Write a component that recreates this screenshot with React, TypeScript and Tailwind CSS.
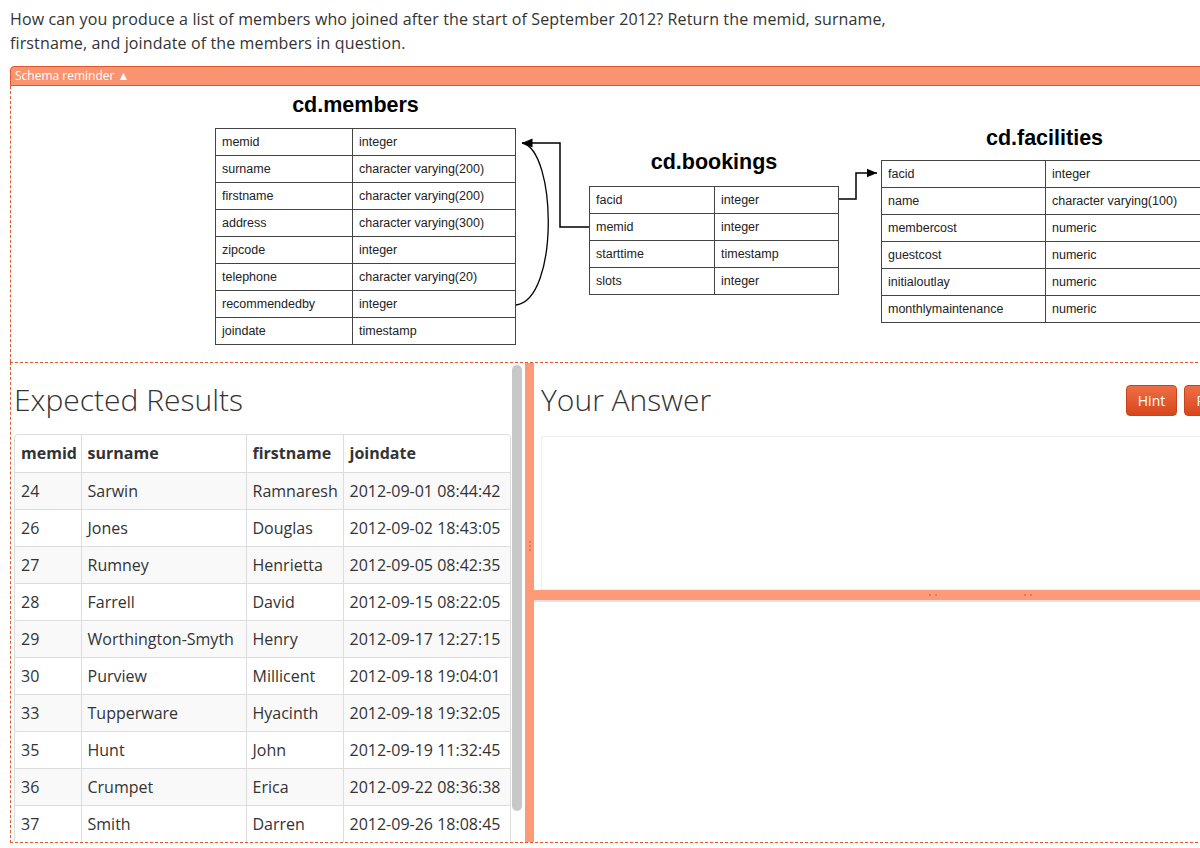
import React from "react";

const MEMBERS: [string, string][] = [
  ["memid", "integer"],
  ["surname", "character varying(200)"],
  ["firstname", "character varying(200)"],
  ["address", "character varying(300)"],
  ["zipcode", "integer"],
  ["telephone", "character varying(20)"],
  ["recommendedby", "integer"],
  ["joindate", "timestamp"],
];

const BOOKINGS: [string, string][] = [
  ["facid", "integer"],
  ["memid", "integer"],
  ["starttime", "timestamp"],
  ["slots", "integer"],
];

const FACILITIES: [string, string][] = [
  ["facid", "integer"],
  ["name", "character varying(100)"],
  ["membercost", "numeric"],
  ["guestcost", "numeric"],
  ["initialoutlay", "numeric"],
  ["monthlymaintenance", "numeric"],
];

const RESULTS: [number, string, string, string][] = [
  [24, "Sarwin", "Ramnaresh", "2012-09-01 08:44:42"],
  [26, "Jones", "Douglas", "2012-09-02 18:43:05"],
  [27, "Rumney", "Henrietta", "2012-09-05 08:42:35"],
  [28, "Farrell", "David", "2012-09-15 08:22:05"],
  [29, "Worthington-Smyth", "Henry", "2012-09-17 12:27:15"],
  [30, "Purview", "Millicent", "2012-09-18 19:04:01"],
  [33, "Tupperware", "Hyacinth", "2012-09-18 19:32:05"],
  [35, "Hunt", "John", "2012-09-19 11:32:45"],
  [36, "Crumpet", "Erica", "2012-09-22 08:36:38"],
  [37, "Smith", "Darren", "2012-09-26 18:08:45"],
];

function SchemaTable({
  title,
  rows,
  col1,
  col2,
  titleClass,
}: {
  title: string;
  rows: [string, string][];
  col1: string;
  col2: string;
  titleClass: string;
}) {
  return (
    <div className="flex flex-col font-['Liberation_Sans',Arial,sans-serif]">
      <div className={`text-center text-[21.5px] font-bold leading-[24px] text-black ${titleClass}`}>
        {title}
      </div>
      <table className="border-collapse text-[12.5px] text-[#222]">
        <tbody>
          {rows.map(([name, type]) => (
            <tr key={name} className="h-[27px]">
              <td className={`${col1} border border-[#444] pl-[6px] align-middle`}>{name}</td>
              <td className={`${col2} border border-[#444] pl-[6px] align-middle`}>{type}</td>
            </tr>
          ))}
        </tbody>
      </table>
    </div>
  );
}

function Connectors() {
  return (
    <svg
      className="pointer-events-none absolute left-0 top-0"
      width="1200"
      height="280"
      viewBox="0 0 1200 280"
      fill="none"
    >
      <defs>
        <marker id="arr" markerWidth="8" markerHeight="8" refX="7" refY="4" orient="auto">
          <path d="M0,1 L7,4 L0,7 Z" fill="#000" />
        </marker>
      </defs>
      <path d="M578 141 H549 V57 H511" stroke="#000" strokeWidth="1.5" markerEnd="url(#arr)" />
      <path d="M505 219 C 548 214, 546 64, 511 57" stroke="#000" strokeWidth="1.3" />
      <path d="M827 113 H845 V87 H866" stroke="#000" strokeWidth="1.5" markerEnd="url(#arr)" />
    </svg>
  );
}

export default function App() {
  return (
    <div className="h-[848px] w-[1200px] overflow-hidden bg-white font-['Open_Sans',sans-serif] text-[#333]">
      <p className="px-[10px] pt-[7px] text-[16px] leading-[24px] tracking-[0.13px]">
        How can you produce a list of members who joined after the start of September 2012? Return the memid, surname,
        <br />
        firstname, and joindate of the members in question.
      </p>

      <div className="ml-[10px] mt-[11px] w-[1228px]">
        {/* Schema reminder */}
        <div className="h-[20px] rounded-tl-[4px] border border-[#e0582a] bg-[#f99471] pl-[4px] text-[12px] leading-[18px] text-white">
          Schema reminder ▲
        </div>
        <div className="relative h-[276px] border-l border-dashed border-[#e0582a]">
          <Connectors />
          <div className="absolute left-[204px] top-[7px]">
            <SchemaTable title="cd.members" rows={MEMBERS} col1="w-[137px]" col2="w-[163px]" titleClass="mb-[11px] -ml-[20px]" />
          </div>
          <div className="absolute left-[578px] top-[64px]">
            <SchemaTable title="cd.bookings" rows={BOOKINGS} col1="w-[125px]" col2="w-[124px]" titleClass="mb-[12px]" />
          </div>
          <div className="absolute left-[870px] top-[40px]">
            <SchemaTable title="cd.facilities" rows={FACILITIES} col1="w-[164px]" col2="w-[170px]" titleClass="mb-[10px] -ml-[8px]" />
          </div>
        </div>

        {/* Lower panel */}
        <div className="flex h-[481px] border-y border-l border-dashed border-[#e0582a]">
          {/* Expected results */}
          <div className="flex w-[514px] overflow-hidden">
            <div className="w-[500px] pl-[3px]">
              <h2 className="mt-[17px] text-[30px] font-light leading-[40px] text-[#333]">Expected Results</h2>
              <div className="mt-[14px] overflow-hidden rounded-t-[4px] border border-[#ddd]">
                <table className="w-full border-collapse text-[16px]">
                  <thead>
                    <tr className="h-[37px] border-b border-[#ddd]">
                      <th className="w-[66px] pl-[6px] text-left font-bold">memid</th>
                      <th className="w-[165px] border-l border-[#ddd] pl-[6px] text-left font-bold">surname</th>
                      <th className="w-[97px] border-l border-[#ddd] pl-[6px] text-left font-bold">firstname</th>
                      <th className="border-l border-[#ddd] pl-[6px] text-left font-bold">joindate</th>
                    </tr>
                  </thead>
                  <tbody>
                    {RESULTS.map((r, i) => (
                      <tr key={r[0]} className={`h-[37px] border-b border-[#ddd] ${i % 2 === 0 ? "bg-[#f9f9f9]" : "bg-white"}`}>
                        <td className="pl-[6px]">{r[0]}</td>
                        <td className="border-l border-[#ddd] pl-[6px]">{r[1]}</td>
                        <td className="border-l border-[#ddd] pl-[6px]">{r[2]}</td>
                        <td className="border-l border-[#ddd] pl-[6px]">{r[3]}</td>
                      </tr>
                    ))}
                  </tbody>
                </table>
              </div>
            </div>
            {/* scrollbar */}
            <div className="ml-[1px] mt-[2px] h-[446px] w-[10px] rounded-[5px] bg-[#c8c8c8]" />
          </div>

          {/* vertical splitter */}
          <div className="flex w-[9px] justify-center bg-[#fd9a78] pt-[178px]">
            <div className="flex flex-col gap-[2px]">
              <span className="block h-[2px] w-[2px] bg-[#e07a5a]" />
              <span className="block h-[2px] w-[2px] bg-[#e07a5a]" />
              <span className="block h-[2px] w-[2px] bg-[#e07a5a]" />
            </div>
          </div>

          {/* Your answer */}
          <div className="flex flex-1 flex-col">
            <div className="flex items-center justify-between pl-[7px] pt-[17px]">
              <h2 className="text-[30px] font-light leading-[40px] text-[#333]">Your Answer</h2>
              <div className="mr-[3px] flex gap-[7px]">
                <button className="h-[31px] w-[51px] rounded-[4px] border border-[#c9421a] bg-gradient-to-b from-[#ef6e45] to-[#d8461a] text-[14px] text-white">
                  Hint
                </button>
                <button className="h-[31px] w-[51px] rounded-[4px] border border-[#c9421a] bg-gradient-to-b from-[#ef6e45] to-[#d8461a] text-[14px] text-white">
                  Run
                </button>
              </div>
            </div>
            <div className="ml-[7px] mt-[16px] h-[154px] border border-[#eee] bg-white" />
            <div className="relative h-[10px] bg-[#fd9a78]">
              <span className="absolute left-[395px] top-[4px] text-[0px]">
                <span className="inline-block h-[2px] w-[8px] border-x-2 border-[#e07a5a]" />
              </span>
              <span className="absolute left-[490px] top-[4px] text-[0px]">
                <span className="inline-block h-[2px] w-[8px] border-x-2 border-[#e07a5a]" />
              </span>
            </div>
            <div className="h-[2px] bg-[#e2e2e2]" />
          </div>
        </div>
      </div>
    </div>
  );
}
